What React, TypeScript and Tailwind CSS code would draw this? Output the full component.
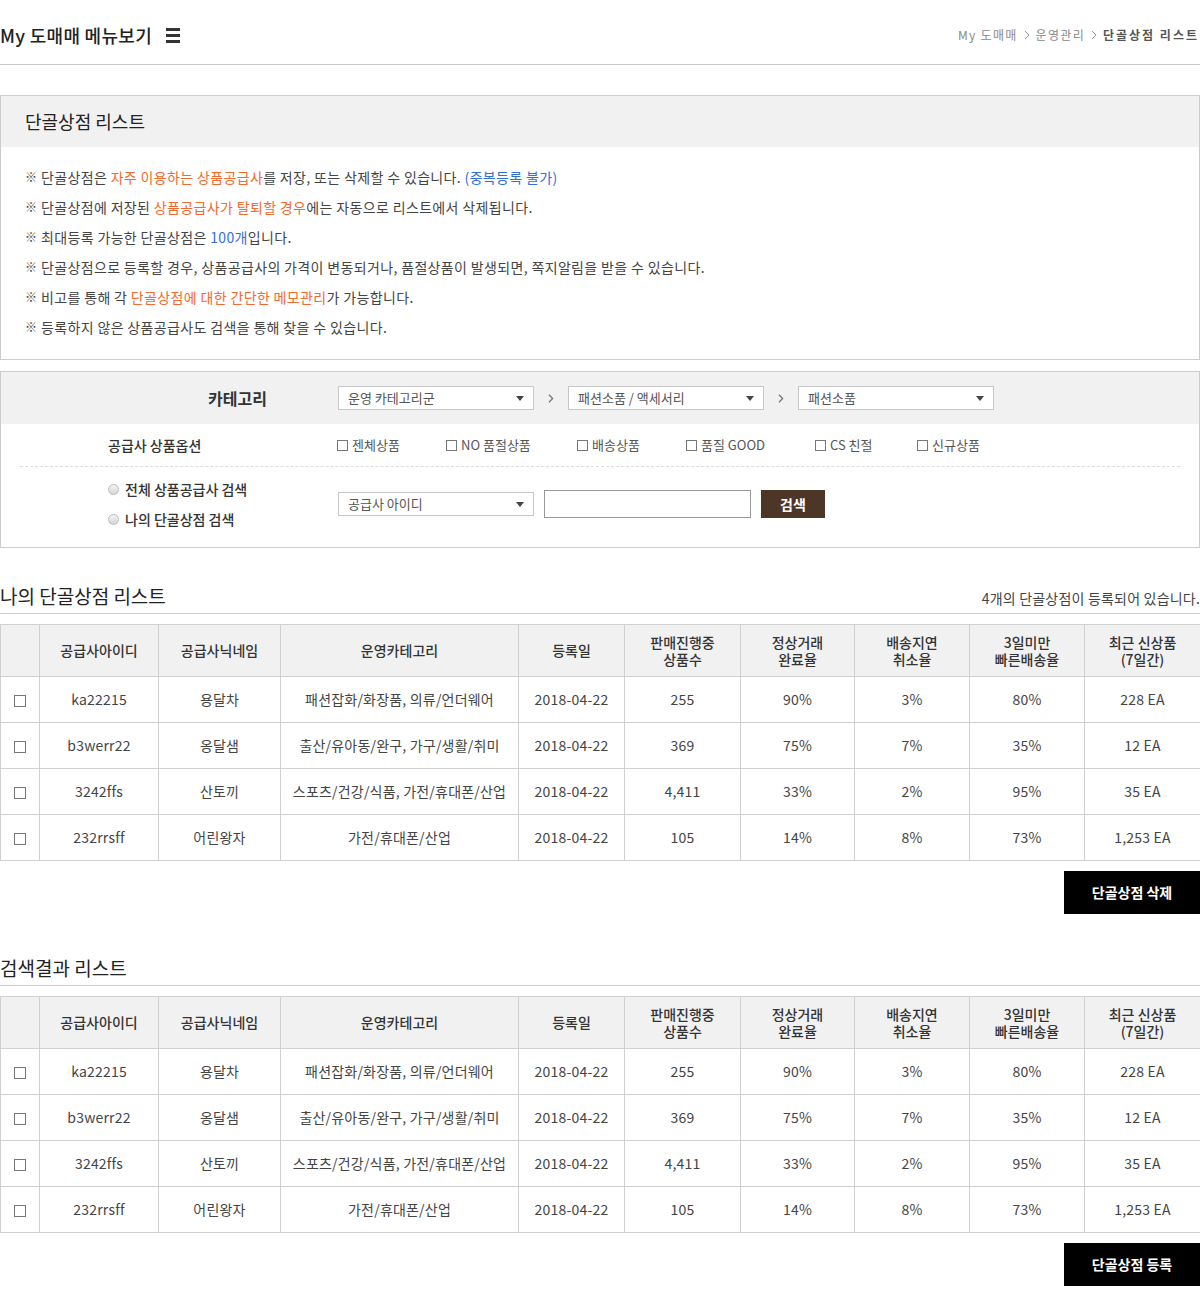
import React from "react";

const FONT = { fontFamily: "'Noto Sans CJK KR', 'Noto Sans', sans-serif" };

const rows = [
  ["ka22215", "용달차", "패션잡화/화장품, 의류/언더웨어", "2018-04-22", "255", "90%", "3%", "80%", "228 EA"],
  ["b3werr22", "옹달샘", "출산/유아동/완구, 가구/생활/취미", "2018-04-22", "369", "75%", "7%", "35%", "12 EA"],
  ["3242ffs", "산토끼", "스포츠/건강/식품, 가전/휴대폰/산업", "2018-04-22", "4,411", "33%", "2%", "95%", "35 EA"],
  ["232rrsff", "어린왕자", "가전/휴대폰/산업", "2018-04-22", "105", "14%", "8%", "73%", "1,253 EA"],
];

const widths = ["w-[39px]", "w-[119px]", "w-[122px]", "w-[238px]", "w-[106px]", "w-[116px]", "w-[114px]", "w-[115px]", "w-[115px]", "w-[116px]"];

function Box() {
  return <span className="inline-block w-[12px] h-[12px] border border-[#777] bg-white align-middle" />;
}

function DataTable() {
  const heads: React.ReactNode[] = [
    "",
    "공급사아이디",
    "공급사닉네임",
    "운영카테고리",
    "등록일",
    <>판매진행중<br />상품수</>,
    <>정상거래<br />완료율</>,
    <>배송지연<br />취소율</>,
    <>3일미만<br />빠른배송율</>,
    <>최근 신상품<br />(7일간)</>,
  ];
  return (
    <table className="w-full border-collapse table-fixed text-[14px] text-[#444]">
      <colgroup>
        {widths.map((w, i) => (
          <col key={i} className={w} />
        ))}
      </colgroup>
      <thead>
        <tr className="h-[52px] bg-[#f1f1f1]">
          {heads.map((h, i) => (
            <th key={i} className="border border-[#d0d0d0] font-medium text-[14px] text-[#333] leading-[17px] text-center">
              {h}
            </th>
          ))}
        </tr>
      </thead>
      <tbody>
        {rows.map((r, i) => (
          <tr key={i} className="h-[46px]">
            <td className="border border-[#d0d0d0] text-center">
              <Box />
            </td>
            {r.map((c, j) => (
              <td key={j} className="border border-[#d0d0d0] text-center whitespace-nowrap font-normal text-[#444] tracking-[0.2px]">
                {c}
              </td>
            ))}
          </tr>
        ))}
      </tbody>
    </table>
  );
}

function Select({ label }: { label: string }) {
  return (
    <div className="w-[196px] h-[24px] border border-[#c8c8c8] bg-white flex items-center justify-between pl-[9px] pr-[9px] text-[13px] text-[#555]">
      <span>{label}</span>
      <span className="w-0 h-0 border-l-[4px] border-r-[4px] border-t-[5px] border-l-transparent border-r-transparent border-t-[#444]" />
    </div>
  );
}

function Chevron() {
  return (
    <span className="w-[34px] flex justify-center">
      <svg width="6" height="9" viewBox="0 0 6 9">
        <path d="M1 0.8 L4.6 4.5 L1 8.2" fill="none" stroke="#777" strokeWidth="1.3" />
      </svg>
    </span>
  );
}

function Crumb() {
  return (
    <svg width="6" height="10" viewBox="0 0 6 10" className="mx-[6px]">
      <path d="M1 1 L5 5 L1 9" fill="none" stroke="#999" strokeWidth="1" />
    </svg>
  );
}

function Check({ label, w }: { label: string; w: string }) {
  return (
    <div className={`${w} flex items-center gap-[4px] text-[13px] text-[#555]`}>
      <span className="inline-block w-[11px] h-[11px] border border-[#777] bg-white" />
      <span>{label}</span>
    </div>
  );
}

function Radio({ label }: { label: string }) {
  return (
    <div className="h-[30px] flex items-center gap-[6px] text-[14px] font-medium text-[#333]">
      <span className="inline-block w-[11px] h-[11px] rounded-full border border-[#bbb] bg-gradient-to-b from-[#f4f4f4] to-[#d6d6d6]" />
      <span>{label}</span>
    </div>
  );
}

const O = "text-[#f26a2e]";
const B = "text-[#2f6fd6]";

export default function App() {
  const lines: React.ReactNode[] = [
    <>단골상점은 <span className={O}>자주 이용하는 상품공급사</span>를 저장, 또는 삭제할 수 있습니다. <span className={B}>(중복등록 불가)</span></>,
    <>단골상점에 저장된 <span className={O}>상품공급사가 탈퇴할 경우</span>에는 자동으로 리스트에서 삭제됩니다.</>,
    <>최대등록 가능한 단골상점은 <span className={B}>100개</span>입니다.</>,
    <>단골상점으로 등록할 경우, 상품공급사의 가격이 변동되거나, 품절상품이 발생되면, 쪽지알림을 받을 수 있습니다.</>,
    <>비고를 통해 각 <span className={O}>단골상점에 대한 간단한 메모관리</span>가 가능합니다.</>,
    <>등록하지 않은 상품공급사도 검색을 통해 찾을 수 있습니다.</>,
  ];
  return (
    <div style={FONT} className="w-[1200px] bg-white text-[#333]">
      {/* Top header */}
      <div className="h-[65px] border-b border-[#c8c8c8] flex items-center justify-between pt-[6px]">
        <div className="flex items-center gap-[14px]">
          <span className="text-[18px] text-[#222] font-medium tracking-[0.3px]">My 도매매 메뉴보기</span>
          <span className="flex flex-col gap-[3px] mt-[1px]">
            <span className="block w-[14px] h-[3px] bg-[#333]" />
            <span className="block w-[14px] h-[3px] bg-[#333]" />
            <span className="block w-[14px] h-[3px] bg-[#333]" />
          </span>
        </div>
        <div className="flex items-center text-[12px] text-[#888] tracking-[1.3px] pr-[1px]">
          <span>My 도매매</span>
          <Crumb />
          <span>운영관리</span>
          <Crumb />
          <span className="font-bold text-[#555] tracking-[2px]">단골상점 리스트</span>
        </div>
      </div>

      {/* Info box */}
      <div className="mt-[30px] border border-[#cccccc]">
        <div className="h-[51px] bg-[#f1f1f1] flex items-center pl-[24px] text-[18px] text-[#222]">단골상점 리스트</div>
        <div className="pt-[15px] pb-[17px] pl-[24px]">
          {lines.map((l, i) => (
            <div key={i} className="h-[30px] flex items-center text-[14px] text-[#444] tracking-[0.35px]">
              <span className="text-[12px] text-[#444] w-[16px]">※</span>
              <span>{l}</span>
            </div>
          ))}
        </div>
      </div>

      {/* Search box */}
      <div className="mt-[11px] border border-[#cccccc]">
        <div className="h-[52px] bg-[#f1f1f1] flex items-center">
          <div className="w-[337px] text-right pr-[71px] text-[16px] font-bold text-[#333]">카테고리</div>
          <Select label="운영 카테고리군" />
          <Chevron />
          <Select label="패션소품 / 액세서리" />
          <Chevron />
          <Select label="패션소품" />
        </div>
        <div className="mx-[19px] h-[43px] flex items-center border-b border-dashed border-[#ddd]">
          <div className="w-[317px] pl-[88px] text-[14px] font-medium text-[#333]">공급사 상품옵션</div>
          <Check label="젠체상품" w="w-[109px]" />
          <Check label="NO 품절상품" w="w-[131px]" />
          <Check label="배송상품" w="w-[109px]" />
          <Check label="품질 GOOD" w="w-[129px]" />
          <Check label="CS 친절" w="w-[102px]" />
          <Check label="신규상품" w="w-[100px]" />
        </div>
        <div className="flex items-center pt-[7px] pb-[13px]">
          <div className="w-[337px] pl-[107px] flex flex-col">
            <Radio label="전체 상품공급사 검색" />
            <Radio label="나의 단골상점 검색" />
          </div>
          <Select label="공급사 아이디" />
          <div className="ml-[10px] w-[207px] h-[28px] border border-[#999] bg-white" />
          <button className="ml-[10px] w-[64px] h-[28px] bg-[#4b3628] text-white text-[14px] font-bold">검색</button>
        </div>
      </div>

      {/* My list */}
      <div className="mt-[34px] flex items-end justify-between border-b border-[#cccccc] pb-[3px]">
        <span className="text-[19px] leading-[28px] text-[#222]">나의 단골상점 리스트</span>
        <span className="text-[14px] leading-[24px] text-[#444] tracking-[0.2px]">4개의 단골상점이 등록되어 있습니다.</span>
      </div>
      <div className="mt-[10px]">
        <DataTable />
      </div>
      <div className="mt-[10px] flex justify-end">
        <button className="w-[136px] h-[43px] bg-black text-white text-[14px] font-bold">단골상점 삭제</button>
      </div>

      {/* Search results */}
      <div className="mt-[40px] flex items-end justify-between border-b border-[#cccccc] pb-[3px]">
        <span className="text-[19px] leading-[28px] text-[#222]">검색결과 리스트</span>
      </div>
      <div className="mt-[10px]">
        <DataTable />
      </div>
      <div className="mt-[10px] flex justify-end pb-[29px]">
        <button className="w-[136px] h-[43px] bg-black text-white text-[14px] font-bold">단골상점 등록</button>
      </div>
    </div>
  );
}
